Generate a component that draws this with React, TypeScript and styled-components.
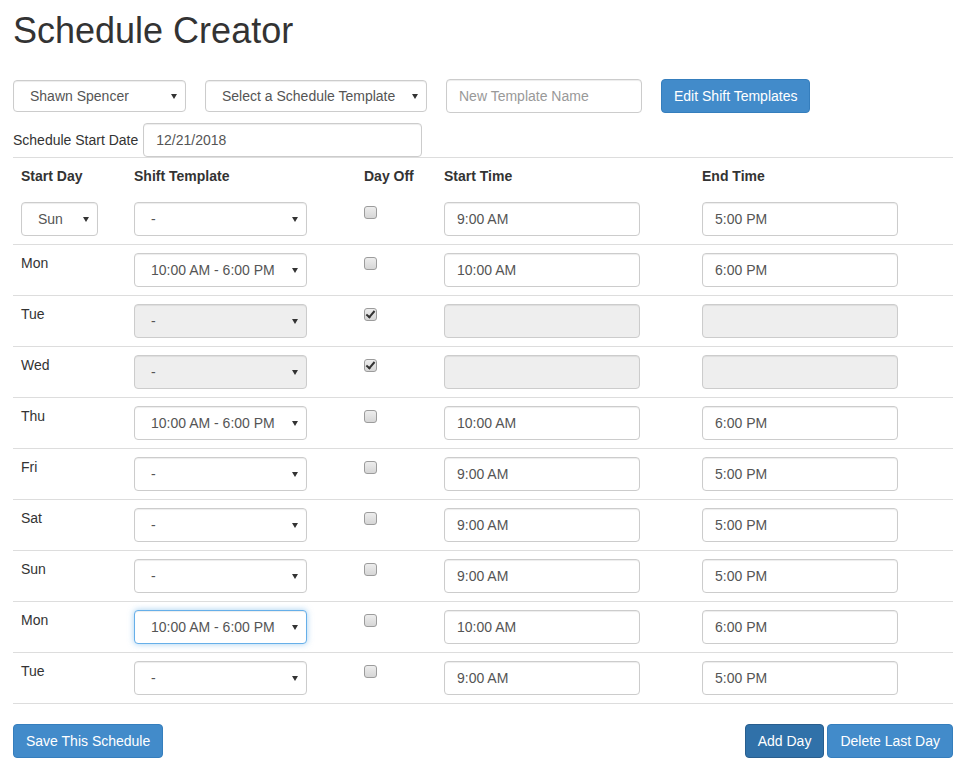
import React from "react";
import styled, { createGlobalStyle, css } from "styled-components";

const GlobalStyle = createGlobalStyle`
  html, body { margin: 0; padding: 0; background: #fff; }
  body {
    font-family: "Liberation Sans", Arial, Helvetica, sans-serif;
    font-size: 14px;
    line-height: 20px;
    color: #333;
  }
  * { box-sizing: border-box; }
`;

const Page = styled.div`
  width: 961px;
  padding: 0 8px 0 13px;
`;

const Title = styled.h1`
  margin: 11px 0 0;
  font-size: 36px;
  line-height: 40px;
  font-weight: 400;
  color: #333;
`;

const Toolbar = styled.div`
  display: flex;
  align-items: center;
  gap: 19px;
  margin-top: 28px;
`;

const DateRow = styled.div`
  display: flex;
  align-items: center;
  gap: 5px;
  margin-top: 10px;
`;

const Label = styled.label`
  font-size: 14px;
  color: #333;
`;

const SelectWrap = styled.div<{ $w: number }>`
  position: relative;
  display: inline-block;
  width: ${(p) => p.$w}px;
  &::after {
    content: "";
    position: absolute;
    right: 9px;
    top: 50%;
    margin-top: -2px;
    border-left: 3px solid transparent;
    border-right: 3px solid transparent;
    border-top: 5px solid #333;
    pointer-events: none;
  }
`;

const Select = styled.select<{ $h: number; $focused?: boolean }>`
  appearance: none;
  -webkit-appearance: none;
  width: 100%;
  height: ${(p) => p.$h}px;
  padding: 0 20px 0 16px;
  font-family: inherit;
  font-size: 14px;
  color: #555;
  background: #fff;
  border: 1px solid #ccc;
  border-radius: 4px;
  box-shadow: inset 0 1px 1px rgba(0, 0, 0, 0.075);
  outline: none;
  &:disabled {
    background: #eee;
    opacity: 1;
    color: #555;
  }
  ${(p) =>
    p.$focused &&
    css`
      border-color: #66afe9;
      box-shadow: inset 0 1px 1px rgba(0, 0, 0, 0.075),
        0 0 6px rgba(102, 175, 233, 0.6);
    `}
`;

const Input = styled.input<{ $w: number }>`
  width: ${(p) => p.$w}px;
  height: 34px;
  padding: 6px 12px;
  font-family: inherit;
  font-size: 14px;
  color: #555;
  background: #fff;
  border: 1px solid #ccc;
  border-radius: 4px;
  box-shadow: inset 0 1px 1px rgba(0, 0, 0, 0.075);
  outline: none;
  &::placeholder { color: #999; }
  &:disabled { background: #eee; }
`;

const Button = styled.button<{ $active?: boolean }>`
  height: 34px;
  padding: 6px 12px;
  font-family: inherit;
  font-size: 14px;
  line-height: 20px;
  color: #fff;
  background: ${(p) => (p.$active ? "#3071a9" : "#428bca")};
  border: 1px solid ${(p) => (p.$active ? "#285e8e" : "#357ebd")};
  border-radius: 4px;
  white-space: nowrap;
  cursor: pointer;
`;

const Table = styled.div`
  width: 940px;
  border-top: 1px solid #ddd;
`;

const GridRow = styled.div<{ $head?: boolean }>`
  display: grid;
  grid-template-columns: 113px 230px 80px 258px 259px;
  border-bottom: ${(p) => (p.$head ? "none" : "1px solid #ddd")};
`;

const Cell = styled.div<{ $head?: boolean }>`
  padding: 8px;
  line-height: 20px;
  font-weight: ${(p) => (p.$head ? 700 : 400)};
  color: #333;
`;

const Check = styled.input`
  appearance: none;
  -webkit-appearance: none;
  position: relative;
  display: block;
  width: 13px;
  height: 13px;
  margin: 4px 0 0;
  border: 1px solid #9c9c9c;
  border-radius: 3px;
  background: linear-gradient(#ededed, #d6d6d6);
  &:checked::after {
    content: "";
    position: absolute;
    left: 3px;
    top: 0px;
    width: 3px;
    height: 7px;
    border-right: 2px solid #333;
    border-bottom: 2px solid #333;
    transform: rotate(40deg);
  }
`;

const Footer = styled.div`
  display: flex;
  justify-content: space-between;
  align-items: center;
  width: 940px;
  margin-top: 20px;
`;

const BtnGroup = styled.div`
  display: flex;
  gap: 3px;
`;

type Row = {
  day: string;
  template: string;
  off: boolean;
  start: string;
  end: string;
  first?: boolean;
  focused?: boolean;
};

const rows: Row[] = [
  { day: "Sun", template: "-", off: false, start: "9:00 AM", end: "5:00 PM", first: true },
  { day: "Mon", template: "10:00 AM - 6:00 PM", off: false, start: "10:00 AM", end: "6:00 PM" },
  { day: "Tue", template: "-", off: true, start: "", end: "" },
  { day: "Wed", template: "-", off: true, start: "", end: "" },
  { day: "Thu", template: "10:00 AM - 6:00 PM", off: false, start: "10:00 AM", end: "6:00 PM" },
  { day: "Fri", template: "-", off: false, start: "9:00 AM", end: "5:00 PM" },
  { day: "Sat", template: "-", off: false, start: "9:00 AM", end: "5:00 PM" },
  { day: "Sun", template: "-", off: false, start: "9:00 AM", end: "5:00 PM" },
  { day: "Mon", template: "10:00 AM - 6:00 PM", off: false, start: "10:00 AM", end: "6:00 PM", focused: true },
  { day: "Tue", template: "-", off: false, start: "9:00 AM", end: "5:00 PM" },
];

export default function App() {
  return (
    <>
      <GlobalStyle />
      <Page>
        <Title>Schedule Creator</Title>
        <Toolbar>
          <SelectWrap $w={173}>
            <Select $h={32} defaultValue="Shawn Spencer">
              <option>Shawn Spencer</option>
            </Select>
          </SelectWrap>
          <SelectWrap $w={222}>
            <Select $h={32} defaultValue="Select a Schedule Template">
              <option>Select a Schedule Template</option>
            </Select>
          </SelectWrap>
          <Input $w={196} placeholder="New Template Name" />
          <Button>Edit Shift Templates</Button>
        </Toolbar>
        <DateRow>
          <Label>Schedule Start Date</Label>
          <Input $w={279} defaultValue="12/21/2018" />
        </DateRow>
        <Table>
          <GridRow $head>
            <Cell $head>Start Day</Cell>
            <Cell $head>Shift Template</Cell>
            <Cell $head>Day Off</Cell>
            <Cell $head>Start Time</Cell>
            <Cell $head>End Time</Cell>
          </GridRow>
          {rows.map((r, i) => (
            <GridRow key={i}>
              <Cell>
                {r.first ? (
                  <SelectWrap $w={77}>
                    <Select $h={34} defaultValue={r.day}>
                      <option>Sun</option>
                      <option>Mon</option>
                      <option>Tue</option>
                      <option>Wed</option>
                      <option>Thu</option>
                      <option>Fri</option>
                      <option>Sat</option>
                    </Select>
                  </SelectWrap>
                ) : (
                  r.day
                )}
              </Cell>
              <Cell>
                <SelectWrap $w={173}>
                  <Select $h={34} defaultValue={r.template} disabled={r.off} $focused={r.focused}>
                    <option>-</option>
                    <option>10:00 AM - 6:00 PM</option>
                  </Select>
                </SelectWrap>
              </Cell>
              <Cell>
                <Check type="checkbox" defaultChecked={r.off} />
              </Cell>
              <Cell>
                <Input $w={196} defaultValue={r.start} disabled={r.off} />
              </Cell>
              <Cell>
                <Input $w={196} defaultValue={r.end} disabled={r.off} />
              </Cell>
            </GridRow>
          ))}
        </Table>
        <Footer>
          <Button>Save This Schedule</Button>
          <BtnGroup>
            <Button $active>Add Day</Button>
            <Button>Delete Last Day</Button>
          </BtnGroup>
        </Footer>
      </Page>
    </>
  );
}
